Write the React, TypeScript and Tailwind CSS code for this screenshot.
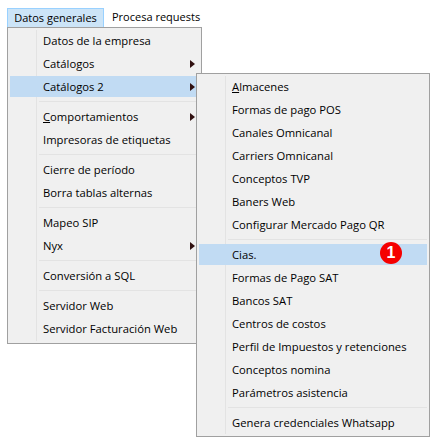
const font = "font-['Open_Sans','Noto_Sans',sans-serif]";

type Item = { label: React.ReactNode; arrow?: boolean; active?: boolean; badge?: boolean } | 'sep';

function Arrow() {
  return (
    <svg width="5" height="8" viewBox="0 0 5 8" className="ml-auto mr-[4px] mt-px">
      <path d="M0 0 L5 4 L0 8 Z" fill="#301010" />
    </svg>
  );
}

function Menu({ items }: { items: Item[] }) {
  return (
    <div className="flex flex-col">
      {items.map((item, i) =>
        item === 'sep' ? (
          <div key={i} className="h-[7px] pt-[3px] pl-[29px]">
            <div className="h-px bg-[#e3e3e3]" />
          </div>
        ) : (
          <div key={i} className="h-[23px] py-px">
            <div className={`relative flex h-[21px] items-center pl-[33px] text-[11.25px] leading-none text-black ${item.active ? 'bg-[#c1dbf3]' : ''}`}>
              {item.label}
              {item.arrow && <Arrow />}
              {item.badge && (
                <span className="absolute left-[181px] -top-[2px] flex h-[22px] w-[22px] items-center justify-center rounded-full bg-[#f50000] font-['Liberation_Sans',sans-serif] text-[16px] font-bold text-white">
                  1
                </span>
              )}
            </div>
          </div>
        )
      )}
    </div>
  );
}

const mainItems: Item[] = [
  { label: 'Datos de la empresa' },
  { label: 'Catálogos', arrow: true },
  { label: 'Catálogos 2', arrow: true, active: true },
  'sep',
  { label: <span><span className="underline">C</span>omportamientos</span>, arrow: true },
  { label: 'Impresoras de etiquetas' },
  'sep',
  { label: 'Cierre de período' },
  { label: 'Borra tablas alternas' },
  'sep',
  { label: 'Mapeo SIP' },
  { label: 'Nyx', arrow: true },
  'sep',
  { label: 'Conversión a SQL' },
  'sep',
  { label: 'Servidor Web' },
  { label: 'Servidor Facturación Web' },
];

const subItems: Item[] = [
  { label: <span><span className="underline">A</span>lmacenes</span> },
  { label: 'Formas de pago POS' },
  { label: 'Canales Omnicanal' },
  { label: 'Carriers Omnicanal' },
  { label: 'Conceptos TVP' },
  { label: 'Baners Web' },
  { label: 'Configurar Mercado Pago QR' },
  'sep',
  { label: 'Cias.', active: true, badge: true },
  { label: 'Formas de Pago SAT' },
  { label: 'Bancos SAT' },
  { label: 'Centros de costos' },
  { label: 'Perfil de Impuestos y retenciones' },
  { label: 'Conceptos nomina' },
  { label: 'Parámetros asistencia' },
  'sep',
  { label: 'Genera credenciales Whatsapp' },
];

export default function App() {
  return (
    <div className={`relative h-[443px] w-[437px] overflow-hidden bg-white pl-[7px] pt-[8px] ${font}`}>
      {/* Menu bar */}
      <div className="flex h-[19px] items-center text-[11px] text-black">
        <div className="flex h-[19px] w-[97px] items-center justify-center border border-b-0 border-[#99d1ff] bg-[#cce4f7]">
          Datos generales
        </div>
        <div className="pl-[8px]">Procesa requests</div>
      </div>

      {/* Main dropdown */}
      <div className="relative w-[195px] border border-[#a0a0a0] bg-[#f0f0f0] px-[2px] pb-[3px] pt-px">
        <div className="absolute bottom-[2px] left-[28px] top-[2px] w-px bg-[#e3e3e3]" />
        <Menu items={mainItems} />
      </div>

      {/* Submenu */}
      <div className="absolute left-[196px] top-[73px] w-[234px] border border-[#a0a0a0] bg-[#f0f0f0] px-[2px] pb-[2px] pt-px">
        <div className="absolute bottom-[2px] left-[28px] top-[2px] w-px bg-[#e3e3e3]" />
        <Menu items={subItems} />
      </div>
    </div>
  );
}
